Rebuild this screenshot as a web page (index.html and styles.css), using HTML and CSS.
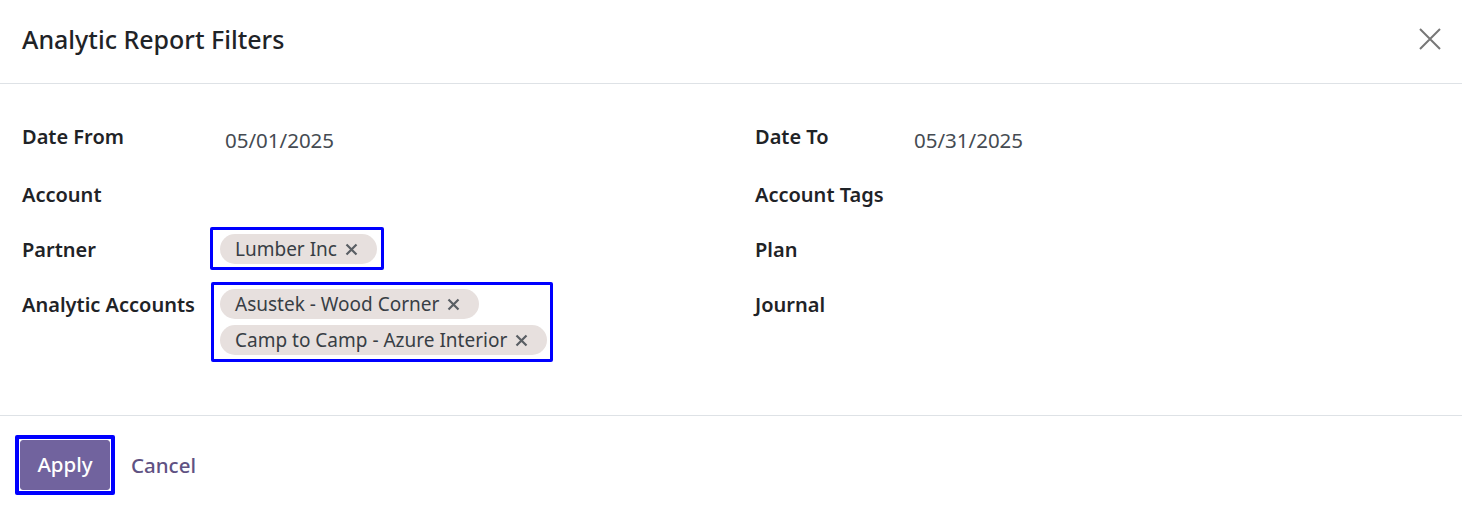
FILE: index.html
```html
<!DOCTYPE html>
<html>
<head>
<meta charset="utf-8">
<link rel="stylesheet" href="styles.css">
</head>
<body>
<div class="modal">
  <header class="modal-header">
    <h4 class="modal-title">Analytic Report Filters</h4>
    <button class="close" aria-label="Close">
      <svg width="22" height="22" viewBox="0 0 22 22"><path d="M1 1 L21 21 M21 1 L1 21" stroke="#777" stroke-width="2" fill="none"/></svg>
    </button>
  </header>
  <main class="modal-body">
    <div class="grid">
      <div class="label">Date From</div>
      <div class="value"><span class="date">05/01/2025</span></div>
      <div class="label">Date To</div>
      <div class="value"><span class="date">05/31/2025</span></div>

      <div class="label">Account</div>
      <div class="value"></div>
      <div class="label">Account Tags</div>
      <div class="value"></div>

      <div class="label">Partner</div>
      <div class="value">
        <div class="hl hl-partner">
          <span class="tag">Lumber Inc <svg class="x" width="13" height="13" viewBox="0 0 13 13"><path d="M1.5 1.5 L11.5 11.5 M11.5 1.5 L1.5 11.5" stroke="#5a5f64" stroke-width="2.2" fill="none"/></svg></span>
        </div>
      </div>
      <div class="label">Plan</div>
      <div class="value"></div>

      <div class="label">Analytic Accounts</div>
      <div class="value">
        <div class="hl hl-accounts">
          <span class="tag">Asustek - Wood Corner <svg class="x" width="13" height="13" viewBox="0 0 13 13"><path d="M1.5 1.5 L11.5 11.5 M11.5 1.5 L1.5 11.5" stroke="#5a5f64" stroke-width="2.2" fill="none"/></svg></span>
          <span class="tag">Camp to Camp - Azure Interior <svg class="x" width="13" height="13" viewBox="0 0 13 13"><path d="M1.5 1.5 L11.5 11.5 M11.5 1.5 L1.5 11.5" stroke="#5a5f64" stroke-width="2.2" fill="none"/></svg></span>
        </div>
      </div>
      <div class="label">Journal</div>
      <div class="value"></div>
    </div>
  </main>
  <footer class="modal-footer">
    <div class="hl-btn"><button class="btn-primary">Apply</button></div>
    <button class="btn-link">Cancel</button>
  </footer>
</div>
</body>
</html>
```
FILE: styles.css
```css
html, body {
  margin: 0;
  padding: 0;
  background: #fff;
}
body {
  font-family: "Noto Sans", "Open Sans", sans-serif;
  color: #212529;
}
.modal {
  width: 1462px;
  height: 508px;
  display: flex;
  flex-direction: column;
}
.modal-header {
  height: 84px;
  flex: none;
  border-bottom: 1px solid #dee2e6;
  display: flex;
  align-items: center;
  justify-content: space-between;
  padding: 0 21px 0 22px;
  box-sizing: border-box;
}
.modal-title {
  margin: 0;
  font-size: 25px;
  font-weight: 500;
  color: #1f2327;
  padding-bottom: 6px;
}
.close {
  border: 0;
  background: none;
  padding: 0;
  width: 22px;
  height: 22px;
  margin-bottom: 5px;
  cursor: pointer;
}
.modal-body {
  flex: none;
  padding: 34px 22px 0 22px;
  height: 332px;
  box-sizing: border-box;
  border-bottom: 1px solid #dee2e6;
}
.grid {
  display: grid;
  grid-template-columns: 198px 535px 154px 1fr;
  grid-auto-rows: 30px;
  grid-template-rows: 36px;
  row-gap: 25px;
}
.label {
  font-size: 20px;
  font-weight: 600;
  color: #1f2327;
  line-height: 30px;
  height: 30px;
  margin-top: 1px;
  white-space: nowrap;
}
.grid > .label:nth-child(-n+4) {
  margin-top: 4px;
}
.value {
  font-size: 19px;
}
.date {
  display: inline-block;
  padding-left: 5px;
  line-height: 30px;
  margin-top: 7px;
  font-size: 20.5px;
  color: #454b52;
}
.hl {
  display: inline-flex;
  flex-direction: column;
  align-items: flex-start;
  border: 3px solid #0000ff;
  border-radius: 2px;
}
.hl-partner {
  padding: 4px 4px 3px 7px;
  margin: -7px 0 0 -10px;
}
.hl-accounts {
  padding: 4px 3px 4px 6px;
  margin: -7px 0 0 -9px;
  row-gap: 6px;
}
.tag {
  display: inline-flex;
  align-items: center;
  height: 30px;
  padding: 0 19px 0 15px;
  background: #e7e0de;
  border-radius: 15px;
  font-size: 19px;
  color: #383e45;
  white-space: nowrap;
}
.x {
  margin-left: 8px;
  flex: none;
}
.modal-footer {
  display: flex;
  align-items: center;
  padding: 19px 0 0 15px;
  gap: 12px;
}
.hl-btn {
  border: 4px solid #0000ff;
  border-radius: 2px;
  padding: 1px;
}
.btn-primary {
  display: block;
  width: 90px;
  height: 50px;
  background: #71639e;
  border: 1px solid #71639e;
  border-radius: 3px;
  color: #fff;
  font-family: "Noto Sans", "Open Sans", sans-serif;
  font-size: 20.5px;
  font-weight: 500;
  padding: 0 0 2px;
}
.btn-link {
  background: none;
  border: 0;
  padding: 0 4px;
  color: #5f5283;
  font-family: "Noto Sans", "Open Sans", sans-serif;
  font-size: 20.5px;
  font-weight: 500;
}
```
